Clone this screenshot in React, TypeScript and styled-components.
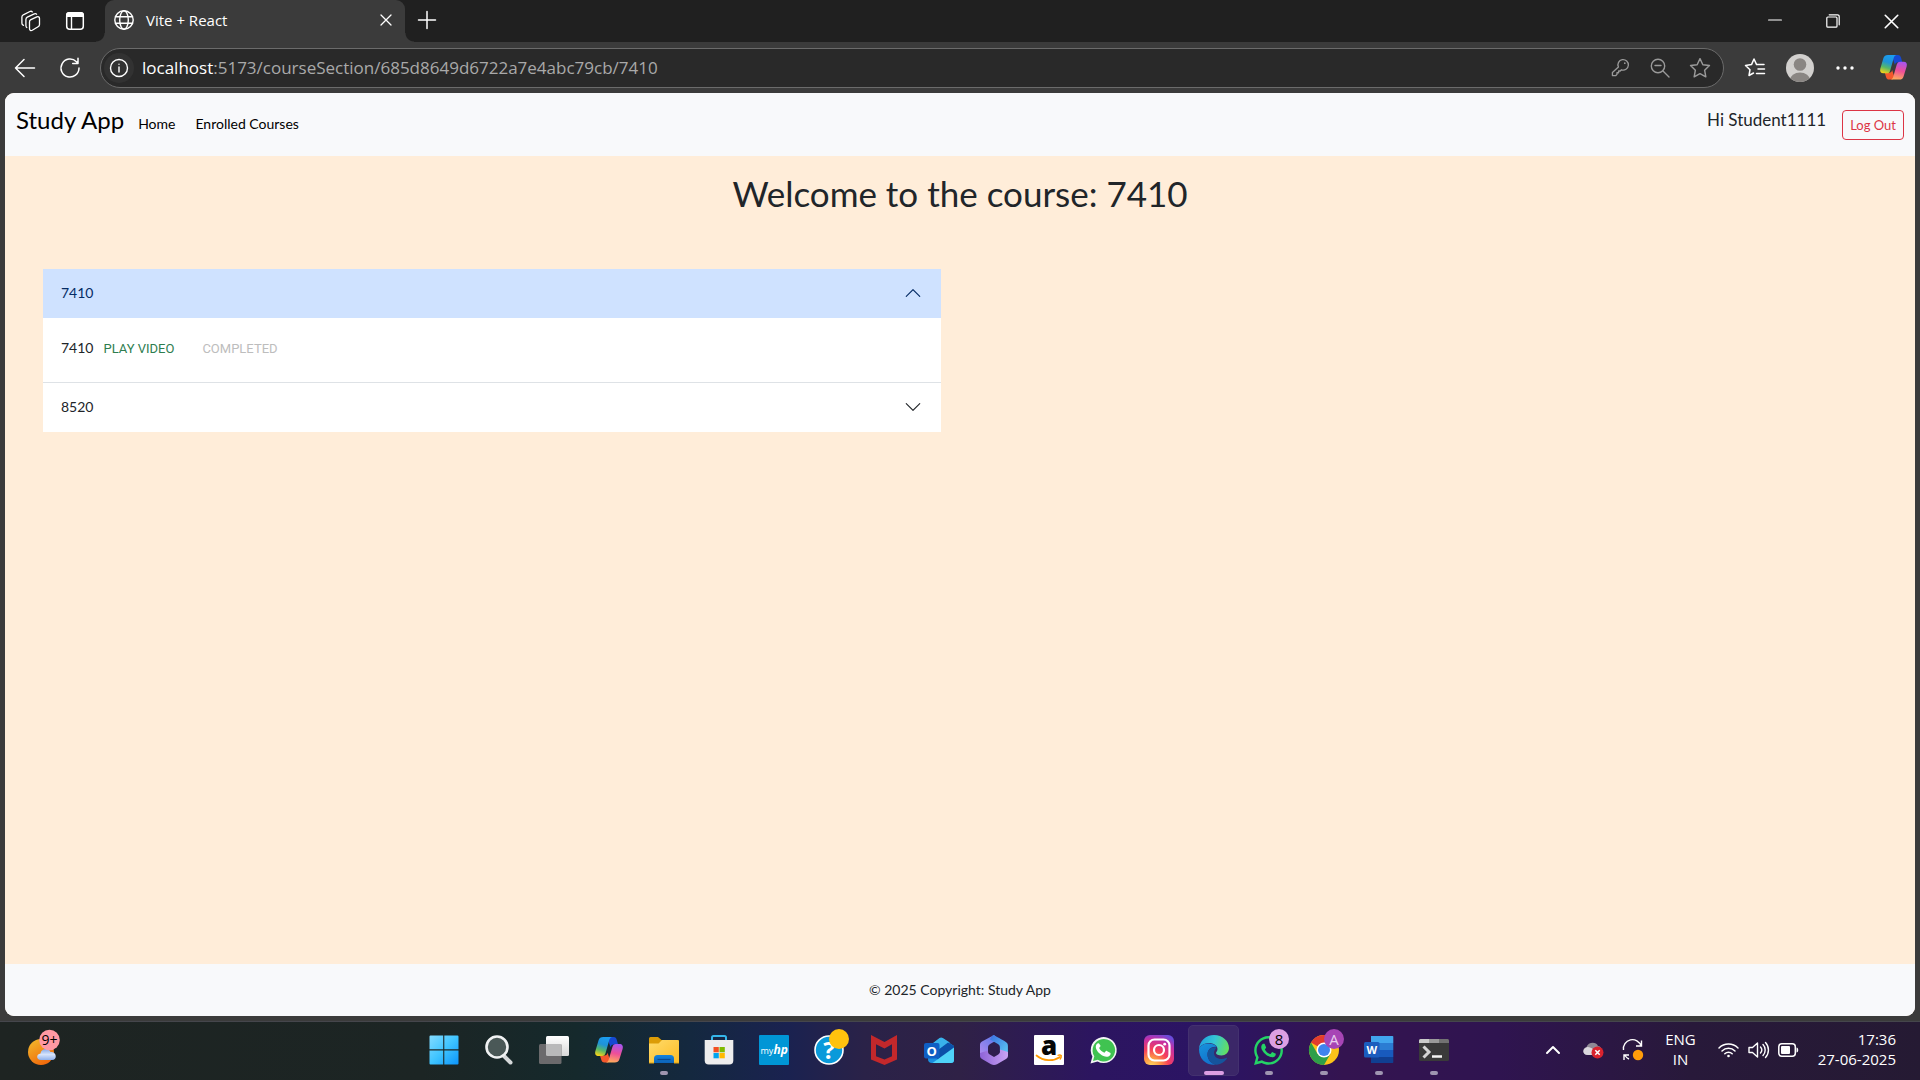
import React, { useId, useState } from "react";
import styled, { createGlobalStyle, css } from "styled-components";
import { FaWhatsapp } from "react-icons/fa";

const uiFont = `"Open Sans", "Noto Sans", sans-serif`;
const pageFont = `Lato, "Open Sans", sans-serif`;

const GlobalStyle = createGlobalStyle`
  *, *::before, *::after { box-sizing: border-box; }
  body { margin: 0; background: #3b3b3b; font-family: ${pageFont}; }
  button, input { font: inherit; color: inherit; }
  svg { display: block; flex: none; overflow: visible; }
`;

/* ---------- browser window ---------- */

const Desktop = styled.div`
  display: flex;
  flex-direction: column;
  min-height: 100vh;
`;

const TabStrip = styled.div`
  display: flex;
  align-items: stretch;
  height: 42px;
  background: #202020;
  color: #fff;
  font: 15px/20px ${uiFont};
`;

const StripTools = styled.div`
  display: flex;
  align-items: center;
  width: 105px;
  padding-left: 7px;
`;

const IconButton = styled.button<{ $w?: number; $h?: number; $tone?: string }>`
  display: flex;
  align-items: center;
  justify-content: center;
  flex: none;
  width: ${(p) => p.$w ?? 45}px;
  height: ${(p) => p.$h ?? 40}px;
  padding: 0;
  border: 0;
  background: none;
  color: ${(p) => p.$tone ?? "#fff"};
`;

const Tab = styled.div`
  position: relative;
  display: flex;
  align-items: center;
  gap: 12px;
  width: 300px;
  padding: 0 4px 2px 9px;
  border-radius: 9px 9px 0 0;
  background: #3b3b3b;

  &::before, &::after {
    content: "";
    position: absolute;
    bottom: 0;
    width: 9px;
    height: 9px;
  }
  &::before {
    left: -9px;
    background: radial-gradient(circle at 0 0, transparent 8px, #3b3b3b 9px);
  }
  &::after {
    right: -9px;
    background: radial-gradient(circle at 100% 0, transparent 8px, #3b3b3b 9px);
  }
`;

const TabTitle = styled.span`
  flex: 1;
  padding-bottom: 1px;
`;

const WindowControls = styled.div`
  display: flex;
  margin-left: auto;
`;

const Toolbar = styled.div`
  display: flex;
  align-items: center;
  height: 51px;
  padding: 0 1px 0 2px;
  background: #3b3b3b;
  color: #fff;
`;

const AddressBar = styled.form`
  display: flex;
  align-items: center;
  flex: 1;
  height: 40px;
  margin: 0 8px;
  padding: 0 3px;
  border: 1px solid #6b6b6b;
  border-radius: 20px;
  background: #292929;
  font: 17px/24px ${uiFont};
`;

const SiteInfo = styled(IconButton)`
  margin-right: 8px;
  border-radius: 50%;
  background: #323232;
`;

const AddressPath = styled.input`
  flex: 1;
  min-width: 0;
  padding: 0;
  border: 0;
  outline: 0;
  background: none;
  color: #a9a9a9;
`;

const Viewport = styled.div`
  display: flex;
  flex-direction: column;
  flex: 1;
  margin: 0 5px 5px;
  overflow: hidden;
  border-radius: 9px;
  background: #ffedd9;
  color: #212529;
  font: 14px/22px ${pageFont};
`;

/* ---------- study app ---------- */

const Navbar = styled.nav`
  display: flex;
  align-items: center;
  height: 63px;
  padding: 0 11px;
  background: #f8f9fb;
`;

const NavLinks = styled.div`
  display: flex;
  align-items: baseline;
  padding-bottom: 9px;
`;

const Brand = styled.a`
  margin-right: 14px;
  color: #000;
  font-size: 24px;
  line-height: 36px;
  text-decoration: none;
`;

const NavLink = styled.a`
  margin-right: 20px;
  color: #000;
  text-decoration: none;
`;

const Greeting = styled.span`
  margin-left: auto;
  margin-right: 16px;
  padding-bottom: 9px;
  font-size: 17px;
`;

const LogOut = styled.button`
  height: 30px;
  padding: 0 7px;
  border: 1px solid #dc3545;
  border-radius: 4px;
  background: none;
  color: #dc3545;
  font-size: 13px;
`;

const Main = styled.main`
  flex: 1;
  padding: 14px 19px;
`;

const Title = styled.h1`
  margin: 0 0 52px;
  font-size: 35px;
  font-weight: 400;
  line-height: 47px;
  text-align: center;
`;

const Columns = styled.div`
  display: grid;
  grid-template-columns: 1fr 1fr;
`;

const Accordion = styled.div`
  margin: 0 19px;
  background: #fff;
`;

const AccordionHeading = styled.h2`
  margin: 0;
  font: inherit;
  & + & { border-top: 1px solid #dee2e6; }
`;

const AccordionButton = styled.button<{ $open: boolean }>`
  display: flex;
  align-items: center;
  justify-content: space-between;
  width: 100%;
  height: 49px;
  padding: 0 19px 1px 18px;
  border: 0;
  background: ${(p) => (p.$open ? "#cfe2ff" : "#fff")};
  color: ${(p) => (p.$open ? "#052c65" : "#212529")};
  text-align: left;

  svg { transform: ${(p) => (p.$open ? "rotate(180deg)" : "none")}; }
`;

const AccordionBody = styled.div`
  display: flex;
  align-items: baseline;
  height: 65px;
  padding: 19px 18px;
  border-bottom: 1px solid #dee2e6;
`;

const LessonButton = styled.button<{ $tone: string }>`
  margin-left: 10px;
  padding: 0;
  border: 0;
  background: none;
  color: ${(p) => p.$tone};
  font: 13px/22px Roboto, sans-serif;

  & + & { margin-left: 28px; }
`;

const Footer = styled.footer`
  height: 52px;
  padding: 15px;
  background: #f8f9fb;
  text-align: center;
`;

/* ---------- taskbar ---------- */

const Taskbar = styled.div`
  display: grid;
  grid-template-columns: 416px auto 1fr;
  align-items: center;
  height: 59px;
  padding-bottom: 2px;
  border-top: 1px solid #45464c;
  background: linear-gradient(
    90deg,
    #1e2422 0%, #1c2524 22%, #15292c 30%, #14283f 36%, #1a2250 41%,
    #2a2248 45%, #2f2146 50%, #2c1560 57%, #2b1464 63%, #341450 70%,
    #2f1450 78%, #28193a 88%, #251a33 100%
  );
  color: #fff;
  font: 15px/20px ${uiFont};
`;

const WeatherButton = styled(IconButton)`
  margin-left: 21px;
  padding-bottom: 4px;
`;

const Apps = styled.div`
  display: flex;
`;

const AppButton = styled.button<{ $active?: boolean }>`
  position: relative;
  display: flex;
  align-items: center;
  justify-content: center;
  width: 51px;
  height: 51px;
  margin: 0 2px;
  padding: 0;
  border: 1px solid transparent;
  border-radius: 5px;
  background: none;
  ${(p) => p.$active && css`
    border-color: #43316f;
    background: #3b2768;
  `}
`;

const Running = styled.span<{ $active?: boolean }>`
  position: absolute;
  bottom: 0;
  left: 50%;
  width: ${(p) => (p.$active ? 20 : 8)}px;
  height: 4px;
  border-radius: 2px;
  background: ${(p) => (p.$active ? "#dc9fe3" : "#9f95b0")};
  transform: translateX(-50%);
`;

const Badge = styled.span<{ $bg: string; $fg?: string }>`
  position: absolute;
  top: 3px;
  right: 4px;
  width: 20px;
  height: 20px;
  border-radius: 50%;
  background: ${(p) => p.$bg};
  color: ${(p) => p.$fg ?? "#000"};
  font-size: 15px;
  line-height: 20px;
  text-align: center;
`;

const Tray = styled.div`
  display: flex;
  align-items: center;
  justify-content: flex-end;
  padding-right: 24px;
`;

const TrayText = styled.button<{ $align: string; $gap: number }>`
  margin-left: ${(p) => p.$gap}px;
  padding: 0 0 2px;
  border: 0;
  background: none;
  text-align: ${(p) => p.$align};
  white-space: pre-line;
`;

const QuickSettings = styled.button`
  display: flex;
  align-items: center;
  gap: 9px;
  margin-left: 22px;
  padding: 0;
  border: 0;
  background: none;
`;

/* ---------- drawings ---------- */

type LineProps = { size?: number; w?: number; children: React.ReactNode; box?: number };
const Line = ({ size = 20, w = 1.5, box = 20, children }: LineProps) => (
  <svg width={size} height={size} viewBox={`0 0 ${box} ${box}`} fill="none" stroke="currentColor"
    strokeWidth={w} strokeLinecap="round" strokeLinejoin="round">{children}</svg>
);

const Workspaces = () => (
  <Line size={22} box={22} w={1.3}>
    <path d="m11.500 9.800 6.300-2.900c1.400-.6 2.700.1 2.700 1.600v6c0 1-.5 1.800-1.400 2.300l-5.800 3.500c-1.400.8-2.800.1-2.800-1.500v-6.700c0-1 .2-1.900 1-2.300Z" />
    <path d="M7.800 17.500c-.6-.4-.9-1-.9-2V9.400c0-1 .5-1.800 1.400-2.300l7-3.300c1-.4 1.900-.2 2.300.5" />
    <path d="M4.500 15.300c-1-.3-1.600-.9-1.600-2V7.100c0-1 .5-1.800 1.400-2.300l6.600-3.300c.9-.4 1.800-.3 2.400.4" />
  </Line>
);

const TabActions = () => (
  <svg width="20" height="20" viewBox="0 0 20 20">
    <rect x="1.700" y="1.700" width="16.600" height="16.600" rx="3" fill="none" stroke="#fff" strokeWidth="1.500" />
    <path d="M1 6V4a3 3 0 0 1 3-3h12a3 3 0 0 1 3 3v2Z" fill="#fff" />
    <path d="M6.500 6v12.500" stroke="#fff" strokeWidth="1.400" />
  </svg>
);

const Globe = () => (
  <Line size={20} w={1.4}>
    <circle cx="10" cy="10" r="9.200" />
    <ellipse cx="10" cy="10" rx="4.300" ry="9.200" />
    <path d="M1.500 6.700h17M1.500 13.300h17" />
  </Line>
);

const Cross = ({ size = 12 }: { size?: number }) => (
  <Line size={size} box={12} w={1.3}><path d="m1 1 10 10M11 1 1 11" /></Line>
);

const STAR = "m10 1.500 2.600 5.500 6 .8-4.400 4.200 1.100 6L10 15.100 4.700 18l1.100-6L1.400 7.800l6-.8Z";

const CopilotLogo = ({ size = 30 }: { size?: number }) => {
  const id = useId();
  return (
    <svg width={size} height={size} viewBox="0 0 30 30">
      <defs>
        <linearGradient id={id + "a"} x1="0.600" y1="0" x2="0.300" y2="1">
          <stop offset="0" stopColor="#1b9df0" /><stop offset=".4" stopColor="#1f93d8" />
          <stop offset=".7" stopColor="#57b867" /><stop offset="1" stopColor="#f2d21b" />
        </linearGradient>
        <linearGradient id={id + "b"} x1="0.600" y1="0" x2="0.400" y2="1">
          <stop offset="0" stopColor="#a855ef" /><stop offset=".5" stopColor="#ee4f98" />
          <stop offset="1" stopColor="#ffab5c" />
        </linearGradient>
      </defs>
      <path d="M16 2h3.500c2 0 2.800 1.200 3.300 3l1.300 4.500h-4.400c-2 0-2.700 1-3.200 2.800L14 5Z" fill="#1649d2" />
      <path d="M14 27.500h-3.500c-2 0-2.800-1.200-3.300-3L6 20.500h4.400c2 0 2.700-1 3.200-2.800L16 25Z" fill="#f4582c" />
      <path d="M9.200 2H18c-1.600.4-2.300 1.600-2.800 3.300L11.600 18c-.6 2-1.500 3-3.500 3H4.600C1.700 21 .6 19 1.400 16L4.600 5.300C5.300 3 6.800 2 9.200 2Z" fill={`url(#${id}a)`} />
      <path d="M20.800 27.500H12c1.600-.4 2.300-1.600 2.800-3.300L18.400 12c.6-2 1.500-3 3.500-3h3.500c2.900 0 4 2 3.200 5l-3.200 10.200c-.7 2.300-2.200 3.300-4.600 3.300Z" fill={`url(#${id}b)`} />
    </svg>
  );
};

const Avatar = () => (
  <svg width="28" height="28" viewBox="0 0 28 28">
    <clipPath id="avatar-clip"><circle cx="14" cy="14" r="14" /></clipPath>
    <g clipPath="url(#avatar-clip)">
      <rect width="28" height="28" fill="#d2d0ce" />
      <circle cx="14" cy="10.500" r="6.300" fill="#8a8683" />
      <ellipse cx="14" cy="26" rx="10" ry="7.500" fill="#8a8683" />
    </g>
  </svg>
);

const Chevron = () => (
  <svg width="18" height="18" viewBox="0 0 16 16" fill="currentColor">
    <path fillRule="evenodd" d="M1.646 4.646a.5.5 0 0 1 .708 0L8 10.293l5.646-5.647a.5.5 0 0 1 .708.708l-6 6a.5.5 0 0 1-.708 0l-6-6a.5.5 0 0 1 0-.708z" />
  </svg>
);

const Art = ({ children }: { children: React.ReactNode }) => (
  <svg width="30" height="30" viewBox="0 0 30 30">{children}</svg>
);

const Weather = () => (
  <svg width="34" height="38" viewBox="0 0 34 38">
    <defs>
      <linearGradient id="sun" x1="0" y1="0" x2=".6" y2="1"><stop stopColor="#f2bd2d" /><stop offset="1" stopColor="#f0690c" /></linearGradient>
      <linearGradient id="cloud" x1="0" y1="0" x2="0" y2="1"><stop stopColor="#86a9e8" /><stop offset=".5" stopColor="#d7e4fb" /><stop offset="1" stopColor="#8fb0ec" /></linearGradient>
    </defs>
    <circle cx="14" cy="23" r="13" fill="url(#sun)" />
    <path d="M14 31c-5 0-5-6-.5-6.500C14 19 22 18.500 23.500 23c6-1 7.500 8 1.500 8Z" fill="url(#cloud)" />
    <circle cx="22.500" cy="11" r="10.300" fill="#ff99a4" />
    <text x="22.500" y="16" textAnchor="middle" fontFamily="Open Sans" fontSize="14" fill="#000">9+</text>
  </svg>
);

const StartLogo = () => (
  <Art>
    <defs><linearGradient id="win" gradientUnits="userSpaceOnUse" x1="0" y1="0" x2="30" y2="30"><stop stopColor="#86dcff" /><stop offset=".5" stopColor="#3fc4ff" /><stop offset="1" stopColor="#0a93fb" /></linearGradient></defs>
    <path d="M1.500.5h12.700v13.700H.5V1.500a1 1 0 0 1 1-1ZM15.300.5h13.200a1 1 0 0 1 1 1v12.700H15.300ZM.5 15.500h13.700v14H1.500a1 1 0 0 1-1-1ZM15.300 15.500h14.200v13a1 1 0 0 1-1 1H15.300Z" fill="url(#win)" />
  </Art>
);

const SearchLogo = () => (
  <Art>
    <path d="m19.500 20.500 7 7" stroke="#d5d8da" strokeWidth="4" strokeLinecap="round" />
    <circle cx="13" cy="12" r="10.500" fill="#4a5857" stroke="#f0f2f3" strokeWidth="2.600" />
  </Art>
);

const TaskView = () => (
  <Art>
    <defs><linearGradient id="tv" x1="0" y1="0" x2="0" y2="1"><stop stopColor="#fff" /><stop offset="1" stopColor="#d8d8d8" /></linearGradient></defs>
    <rect x="7" y="1" width="23" height="20" rx="1.500" fill="url(#tv)" />
    <rect x="0" y="9" width="22.500" height="20" rx="1.500" fill="#6b6a6c" />
    <path d="M7 9h15.500v12H8.500A1.500 1.500 0 0 1 7 19.500Z" fill="#b9b9ba" />
  </Art>
);

const Folder = () => (
  <Art>
    <defs>
      <linearGradient id="fold" x1="0" y1="0" x2="1" y2="1"><stop stopColor="#ffdb6b" /><stop offset="1" stopColor="#fdbc25" /></linearGradient>
      <linearGradient id="foldb" x1="0" y1="0" x2="0" y2="1"><stop stopColor="#1583dd" /><stop offset="1" stopColor="#0c63b8" /></linearGradient>
    </defs>
    <path d="M0 3.500A1.500 1.500 0 0 1 1.500 2H9l3.500 3H29a1 1 0 0 1 1 1v5H0Z" fill="#dc9c07" />
    <path d="M0 8.500h9.500L13 5h15.500A1.500 1.500 0 0 1 30 6.500V28H0Z" fill="url(#fold)" />
    <path d="M5 28v-4.500A3.500 3.500 0 0 1 8.500 20h13a3.500 3.500 0 0 1 3.500 3.500V28Z" fill="url(#foldb)" />
    <path d="M8.500 24.500h13" stroke="#0a4a93" strokeWidth="1.200" />
    <path d="M0 28h5M25 28h5" stroke="#dba013" />
  </Art>
);

const Store = () => (
  <Art>
    <path d="M8 6.500V2.500A1.500 1.500 0 0 1 9.500 1h11A1.500 1.500 0 0 1 22 2.500v4" fill="none" stroke="#35b6ea" strokeWidth="2" />
    <path d="M.7 5h28.600v20.500a4 4 0 0 1-4 4H4.700a4 4 0 0 1-4-4Z" fill="#eeedee" />
    <path d="M9.500 12h5.300v5.300H9.500Z" fill="#f25022" /><path d="M15.500 12h5.300v5.300h-5.300Z" fill="#7fba00" />
    <path d="M9.500 18h5.300v5.300H9.500Z" fill="#00a4ef" /><path d="M15.500 18h5.300v5.300h-5.300Z" fill="#ffb900" />
  </Art>
);

const MyHp = () => (
  <Art>
    <rect width="30" height="30" rx="1" fill="#0096d6" />
    <text x="1.500" y="18.500" fontFamily="Open Sans" fontSize="9" fill="#fff">my</text>
    <text x="14.500" y="18.500" fontFamily="Open Sans" fontSize="12" fontStyle="italic" fontWeight="700" fill="#fff">hp</text>
  </Art>
);

const Help = () => (
  <Art>
    <circle cx="15" cy="15" r="14" fill="#0a9ada" stroke="#fff" strokeWidth="1.600" />
    <text x="15" y="23.500" textAnchor="middle" fontFamily="Open Sans" fontSize="24" fontWeight="700" fill="#fff">?</text>
  </Art>
);

const McAfee = () => (
  <Art>
    <path d="M2 0 15.500 7 28 0v24.500L15.500 30 2 24.500Z" fill="#c3282b" />
    <path d="M7 9.200 15.500 13.500 23 9.200v12L15.500 24.500 7 21.200Z" fill="#2c2147" />
  </Art>
);

const Outlook = () => (
  <Art>
    <path d="M4 12 15.500 3.500a3 3 0 0 1 3.300 0L30 11v14a3 3 0 0 1-3 3H8a4 4 0 0 1-4-4Z" fill="#1a8fe0" />
    <path d="m4 12 11.500-9c1-.8 2.300-.8 3.300 0l7 4.600L8 19H4Z" fill="#39b2ea" />
    <path d="M24 7.500 30 11v3L14 25l-4-7Z" fill="#0b50a8" />
    <path d="M30 12.500V25a3 3 0 0 1-3 3H8.500Z" fill="#4fd3f8" />
    <rect x="0" y="8" width="15.500" height="15.500" rx="2" fill="#0f5fc4" />
    <text x="7.700" y="20.500" textAnchor="middle" fontFamily="Open Sans" fontSize="13" fontWeight="700" fill="#fff">O</text>
  </Art>
);

const M365 = () => (
  <Art>
    <defs>
      <linearGradient id="m1" x1="1" y1="0" x2="0" y2="1"><stop stopColor="#4f76e8" /><stop offset="1" stopColor="#b48bf0" /></linearGradient>
      <linearGradient id="m2" x1="0" y1="0" x2="1" y2="1"><stop stopColor="#3a6fe0" /><stop offset="1" stopColor="#5fd0f5" /></linearGradient>
      <linearGradient id="m3" x1="0" y1="0" x2="1" y2="0"><stop stopColor="#8e63d8" /><stop offset="1" stopColor="#c9a3f2" /></linearGradient>
    </defs>
    <path d="M15 0 3 6.500C1.500 7.500 1 8.500 1 10v11l8-4.500v-4c0-2 1-3 2.500-3.800L20 4Z" fill="url(#m1)" />
    <path d="M14.500 0c4 2.500 12 6 13.500 8 .8 1 .9 2 .9 3v10l-8-4.500v-4c0-1.500-.5-2.500-2-3.500L11 4.500C12 2.500 13 1 14.500 0Z" fill="url(#m2)" />
    <path d="M1 18v2.500c0 1.500.5 2.500 2 3.400l9 5.300c2 1.100 4 1.100 6 0l9-5.300c1.500-.9 2-1.900 2-3.400V17l-8-2.500v2.300c0 1.300-.7 2-1.700 2.600L15 22l-5-3C9 18.300 9 17 9 15.500Z" fill="url(#m3)" />
  </Art>
);

const Amazon = () => (
  <Art>
    <rect width="30" height="30" rx="1" fill="#fff" />
    <text x="15" y="19.500" textAnchor="middle" fontFamily="Open Sans" fontSize="26" fontWeight="800" fill="#050505">a</text>
    <path d="M2.500 20.500c7 6 17 6 23.500 1.500" fill="none" stroke="#f90" strokeWidth="1.700" strokeLinecap="round" />
    <path d="M23.500 20.500c1.500-.6 3-.6 3.800 0 .2 1.200-.4 3-1.500 4" fill="none" stroke="#f90" strokeWidth="1.300" />
  </Art>
);

const PHONE = "M10 8.500c-.7-.5-1.400-.3-2 .3-3 3.200.2 8 3.200 10.200 3.500 2.800 7.500 4 9.800 1.200.7-.9.7-1.700.5-2.300l-3.700-2c-.5-.2-.8 0-1.100.3l-1.300 1.600c-2.600-1-4.300-2.600-5.300-4.700l1.200-1.600c.2-.4.200-.6.100-.9Z";

const WhatsAppDesktop = () => (
  <Art>
    <path d="M1.500 28.500 3.400 21.500A13 13 0 1 1 8.500 26.500Z" fill="#f3f6f4" />
    <path d="M4 26 5.300 21.300A11.300 11.300 0 1 1 8.800 24.800Z" fill="#40c351" />
    <path d={PHONE} fill="#fff" />
  </Art>
);

const InstagramTile = () => (
  <svg width="30" height="30" viewBox="0 0 30 30">
    <defs>
      <radialGradient id="ig" cx=".25" cy="1.050" r="1.150"><stop stopColor="#ffdc64" /><stop offset=".25" stopColor="#fd9a45" /><stop offset=".5" stopColor="#f7405a" /><stop offset=".8" stopColor="#c42fa5" /><stop offset="1" stopColor="#6a4bdb" /></radialGradient>
    </defs>
    <rect width="30" height="30" rx="6" fill="url(#ig)" />
    <rect x="4.500" y="4.500" width="21" height="21" rx="6" fill="none" stroke="#fff" strokeWidth="2.200" />
    <circle cx="15" cy="15" r="5" fill="none" stroke="#fff" strokeWidth="2.200" />
    <circle cx="20.700" cy="9.200" r="1.400" fill="#fff" />
  </svg>
);

const Edge = () => (
  <Art>
    <defs>
      <linearGradient id="e1" x1="0" y1=".3" x2="1" y2=".5"><stop stopColor="#1fa0e0" /><stop offset=".5" stopColor="#35c6d4" /><stop offset="1" stopColor="#64df5f" /></linearGradient>
      <linearGradient id="e2" x1="0" y1="0" x2=".5" y2="1"><stop stopColor="#1794dd" /><stop offset="1" stopColor="#1272cb" /></linearGradient>
    </defs>
    <path d="M0 14C.5 6 7 0 15 0c8.500 0 15 6 15 13 0 4.500-3.500 7.500-7.500 7.500-3 0-5.500-1-5.500-2.500 0-1 1.500-1.500 1.500-4C18.500 10.500 14.500 8 10 8 5 8 1.500 10.500 0 14Z" fill="url(#e1)" />
    <path d="M0 14c1.500-3.500 5-5.500 9.500-5.500 4 0 7 1.500 8.500 3.500-5-1-9.500 2-9.500 7.500 0 4.500 3 8.500 8 10.300C7 30.500 0 24 0 14Z" fill="url(#e2)" />
    <path d="M17.500 12.500c-5-1.200-9 2.200-9 7 0 5.500 4.500 10.500 9.500 10.200 4-.4 7.500-2.700 9.800-6 .4-.6 0-1-.6-.8-5.700 2.600-12.200.4-12.200-4.900 0-2.300 1.200-3.500 2.500-5.500Z" fill="#15549c" />
  </Art>
);

const Chrome = () => (
  <Art>
    <circle cx="15" cy="15" r="15" fill="#fcc319" />
    <path d="M15 15 2 7.500A15 15 0 0 1 28 7.500H15Z" fill="#e33b2e" />
    <path d="M2 7.500A15 15 0 0 0 15 30l6.500-11.200L15 15 8.500 18.800Z" fill="#2d9f49" />
    <circle cx="15" cy="15" r="7.500" fill="#fff" /><circle cx="15" cy="15" r="6" fill="#3f83ee" />
  </Art>
);

const Word = () => (
  <Art>
    <path d="M7 1h21.500a.8.800 0 0 1 .8.800V8H7Z" fill="#41a5ee" /><path d="M7 8h22.300v7H7Z" fill="#2b7cd3" />
    <path d="M7 15h22.300v7H7Z" fill="#185abd" /><path d="M7 22h22.300v5.200a.8.800 0 0 1-.8.800H7Z" fill="#103f91" />
    <rect x="0" y="7" width="15.500" height="15.500" rx="1.500" fill="#1b5dbe" />
    <text x="7.700" y="19" textAnchor="middle" fontFamily="Open Sans" fontSize="11" fontWeight="700" fill="#fff">W</text>
  </Art>
);

const Terminal = () => (
  <Art>
    <rect y="4" width="30" height="22" rx="1.500" fill="#3a3a3a" />
    <path d="M0 8V5.500A1.500 1.500 0 0 1 1.500 4H10v4Z" fill="#c9c9c9" /><path d="M10 4h10v4H10Z" fill="#9a9a9a" /><path d="M20 4h8.500A1.500 1.500 0 0 1 30 5.500V8H20Z" fill="#727272" />
    <path d="m4.500 11.500 5.500 5.500-5.500 5.500" fill="none" stroke="#d4d4d4" strokeWidth="3" />
    <path d="M13 21.500h10" stroke="#f4f4f4" strokeWidth="2.500" />
  </Art>
);

const CloudError = () => (
  <svg width="21" height="18" viewBox="0 0 21 18">
    <path d="M5 14c-6 0-6-7-1.500-8C5 1 13 0 15 5c4 .5 4 5 1 6Z" fill="#8f8995" /><path d="M5 14c-6 0-6-7-.5-8 3-.2 6 2 11 5l-5 3Z" fill="#dad7dd" />
    <circle cx="14.500" cy="11.500" r="6" fill="#d9232e" />
    <path d="m12.300 9.300 4.400 4.400m0-4.400-4.400 4.400" stroke="#fff" strokeWidth="1.500" />
  </svg>
);

const UpdateArrows = () => (
  <svg width="22" height="22" viewBox="0 0 22 22" fill="none" stroke="#fff" strokeWidth="1.400">
    <path d="M1.500 11A9 9 0 0 1 19 7M19.500 1.500V7H14M3 16.500a9 9 0 0 0 4 3.500M2 21v-5h5" />
    <circle cx="16" cy="16" r="5.200" fill="#ff9d0a" stroke="none" />
  </svg>
);

const Wifi = () => (
  <svg width="21" height="16" viewBox="0 0 21 16" fill="none" stroke="#fff" strokeWidth="1.500" strokeLinecap="round">
    <path d="M1 6a13.500 13.500 0 0 1 19 0M4 9a9.300 9.300 0 0 1 13 0M6.800 11.800a5.300 5.300 0 0 1 7.400 0" />
    <circle cx="10.500" cy="14" r="1.300" fill="#fff" stroke="none" />
  </svg>
);

const Speaker = () => (
  <svg width="21" height="18" viewBox="0 0 21 18" fill="none" stroke="#fff" strokeWidth="1.400" strokeLinecap="round" strokeLinejoin="round">
    <path d="M1 6.500v5h3.500L9.500 16V2L4.500 6.500ZM12.500 6a4.500 4.500 0 0 1 0 6M15 3.500a8 8 0 0 1 0 11M17.500 1.500a11 11 0 0 1 0 15" />
  </svg>
);

const Battery = () => (
  <svg width="21" height="14" viewBox="0 0 21 14">
    <rect x=".8" y=".8" width="16.500" height="12.400" rx="3" fill="none" stroke="#fff" strokeWidth="1.500" />
    <rect x="3" y="3" width="9" height="8" rx="1" fill="#fff" /><path d="M18.500 4.500c2.300.3 2.300 4.700 0 5Z" fill="#fff" />
  </svg>
);

/* ---------- data ---------- */

type App = { name: string; art: React.ReactNode; running?: boolean; active?: boolean; badge?: { bg: string; fg?: string; text?: string } };

const apps: App[] = [
  { name: "Start", art: <StartLogo /> },
  { name: "Search", art: <SearchLogo /> },
  { name: "Task View", art: <TaskView /> },
  { name: "Copilot", art: <CopilotLogo /> },
  { name: "File Explorer", art: <Folder />, running: true },
  { name: "Microsoft Store", art: <Store /> },
  { name: "myHP", art: <MyHp /> },
  { name: "Support Assistant", art: <Help />, badge: { bg: "#ffc20e" } },
  { name: "McAfee", art: <McAfee /> },
  { name: "Outlook", art: <Outlook /> },
  { name: "Microsoft 365", art: <M365 /> },
  { name: "Amazon", art: <Amazon /> },
  { name: "WhatsApp", art: <WhatsAppDesktop /> },
  { name: "Instagram", art: <InstagramTile /> },
  { name: "Edge", art: <Edge />, running: true, active: true },
  { name: "WhatsApp chats", art: <FaWhatsapp size={33} color="#25d366" />, running: true, badge: { bg: "#dc9fe3", text: "8" } },
  { name: "Chrome", art: <Chrome />, running: true, badge: { bg: "#a745b5", fg: "#e9cdf0", text: "A" } },
  { name: "Word", art: <Word />, running: true },
  { name: "Terminal", art: <Terminal />, running: true },
];

const sections = [
  { id: "s1", title: "7410", lesson: "7410" },
  { id: "s2", title: "8520", lesson: "8520" },
];

export default function App() {
  const [open, setOpen] = useState("s1");
  const [path, setPath] = useState(":5173/courseSection/685d8649d6722a7e4abc79cb/7410");

  return (
    <Desktop>
      <GlobalStyle />
      <TabStrip>
        <StripTools>
          <IconButton aria-label="Workspaces"><Workspaces /></IconButton>
          <IconButton aria-label="Tab actions"><TabActions /></IconButton>
        </StripTools>
        <Tab>
          <Globe />
          <TabTitle>Vite + React</TabTitle>
          <IconButton aria-label="Close tab" $w={30} $h={30}><Cross /></IconButton>
        </Tab>
        <IconButton aria-label="New tab" $w={43}><Line size={20} w={1.5}><path d="M10 1.500v17M1.500 10h17" /></Line></IconButton>
        <WindowControls>
          <IconButton aria-label="Minimize" $w={58}><Line size={14} box={14} w={1.2}><path d="M.6 7h12.800" /></Line></IconButton>
          <IconButton aria-label="Restore" $w={58} $h={42}>
            <Line size={14} box={14} w={1.2}><rect x=".8" y="3" width="10.200" height="10.200" rx="1" /><path d="M3.200.8h8.300a1.700 1.700 0 0 1 1.700 1.700v8.300" /></Line>
          </IconButton>
          <IconButton aria-label="Close" $w={58} $h={42}><Cross size={15} /></IconButton>
        </WindowControls>
      </TabStrip>

      <Toolbar>
        <IconButton aria-label="Back"><Line size={22} box={22}><path d="M20.500 11H1.500M10 2.500 1.500 11l8.500 8.500" /></Line></IconButton>
        <IconButton aria-label="Reload"><Line size={22} box={22}><path d="M20 11a9 9 0 1 1-2.600-6.300L19 6.300M19 1.200v5.300h-5.300" /></Line></IconButton>
        <AddressBar onSubmit={(e) => e.preventDefault()}>
          <SiteInfo type="button" aria-label="Site information" $w={30} $h={30}>
            <Line size={20} w={1.4}><circle cx="10" cy="10" r="8.500" /><path d="M10 9v5M10 6.200v.1" /></Line>
          </SiteInfo>
          <label htmlFor="address">localhost</label>
          <AddressPath id="address" value={path} onChange={(e) => setPath(e.target.value)} spellCheck={false} />
          <IconButton type="button" aria-label="Passwords" $w={40} $tone="#9a9a9a">
            <Line size={19} w={1.4}><path d="M7.800 9.500A5.500 5.500 0 1 1 11 12.400l-1.300 1.300H8v1.800H6.300v1.700l-1.200 1.300H1.500v-3.200Z" /><circle cx="14.500" cy="5.500" r=".9" fill="currentColor" stroke="none" /></Line>
          </IconButton>
          <IconButton type="button" aria-label="Zoom out" $w={40} $tone="#9a9a9a">
            <Line size={20} w={1.4}><circle cx="8" cy="8" r="6.700" /><path d="m13 13 6 6M5 7.500h6" /></Line>
          </IconButton>
          <IconButton type="button" aria-label="Add to favorites" $w={40} $tone="#9a9a9a"><Line size={22} w={1.3}><path d={STAR} /></Line></IconButton>
        </AddressBar>
        <IconButton aria-label="Favorites">
          <Line size={22} box={22}><path d="M9.500 16 5 18.500l1-5.800L1.500 8.500l6-.9L10 2l2.600 5.600H20M14 12h6.500M12.500 16.500h8" /></Line>
        </IconButton>
        <IconButton aria-label="Profile"><Avatar /></IconButton>
        <IconButton aria-label="Settings and more">
          <svg width="18" height="4" fill="#fff"><circle cx="2" cy="2" r="1.700" /><circle cx="9" cy="2" r="1.700" /><circle cx="16" cy="2" r="1.700" /></svg>
        </IconButton>
        <IconButton aria-label="Copilot" $w={52}><CopilotLogo size={29} /></IconButton>
      </Toolbar>

      <Viewport>
        <Navbar>
          <NavLinks>
            <Brand href="#">Study App</Brand>
            <NavLink href="#">Home</NavLink>
            <NavLink href="#">Enrolled Courses</NavLink>
          </NavLinks>
          <Greeting>Hi Student1111</Greeting>
          <LogOut>Log Out</LogOut>
        </Navbar>
        <Main>
          <Title>Welcome to the course: 7410</Title>
          <Columns>
            <Accordion>
              {sections.map((s) => (
                <React.Fragment key={s.id}>
                  <AccordionHeading>
                    <AccordionButton $open={open === s.id} aria-expanded={open === s.id} onClick={() => setOpen(open === s.id ? "" : s.id)}>
                      {s.title}
                      <Chevron />
                    </AccordionButton>
                  </AccordionHeading>
                  {open === s.id && (
                    <AccordionBody>
                      {s.lesson}
                      <LessonButton $tone="#2e7d4f">PLAY VIDEO</LessonButton>
                      <LessonButton $tone="#bdbdbd" disabled>COMPLETED</LessonButton>
                    </AccordionBody>
                  )}
                </React.Fragment>
              ))}
            </Accordion>
          </Columns>
        </Main>
        <Footer>© 2025 Copyright: Study App</Footer>
      </Viewport>

      <Taskbar>
        <WeatherButton aria-label="Widgets"><Weather /></WeatherButton>
        <Apps>
          {apps.map((a) => (
            <AppButton key={a.name} aria-label={a.name} $active={a.active}>
              {a.art}
              {a.badge && <Badge $bg={a.badge.bg} $fg={a.badge.fg}>{a.badge.text}</Badge>}
              {a.running && <Running $active={a.active} />}
            </AppButton>
          ))}
        </Apps>
        <Tray>
          <IconButton aria-label="Show hidden icons" $w={40}><Line size={14} box={14} w={2}><path d="m1 10 6-6 6 6" /></Line></IconButton>
          <IconButton aria-label="OneDrive" $w={40}><CloudError /></IconButton>
          <IconButton aria-label="Update" $w={40}><UpdateArrows /></IconButton>
          <TrayText $align="center" $gap={12}>{"ENG\nIN"}</TrayText>
          <QuickSettings aria-label="Quick settings"><Wifi /><Speaker /><Battery /></QuickSettings>
          <TrayText $align="right" $gap={19}>{"17:36\n27-06-2025"}</TrayText>
        </Tray>
      </Taskbar>
    </Desktop>
  );
}
